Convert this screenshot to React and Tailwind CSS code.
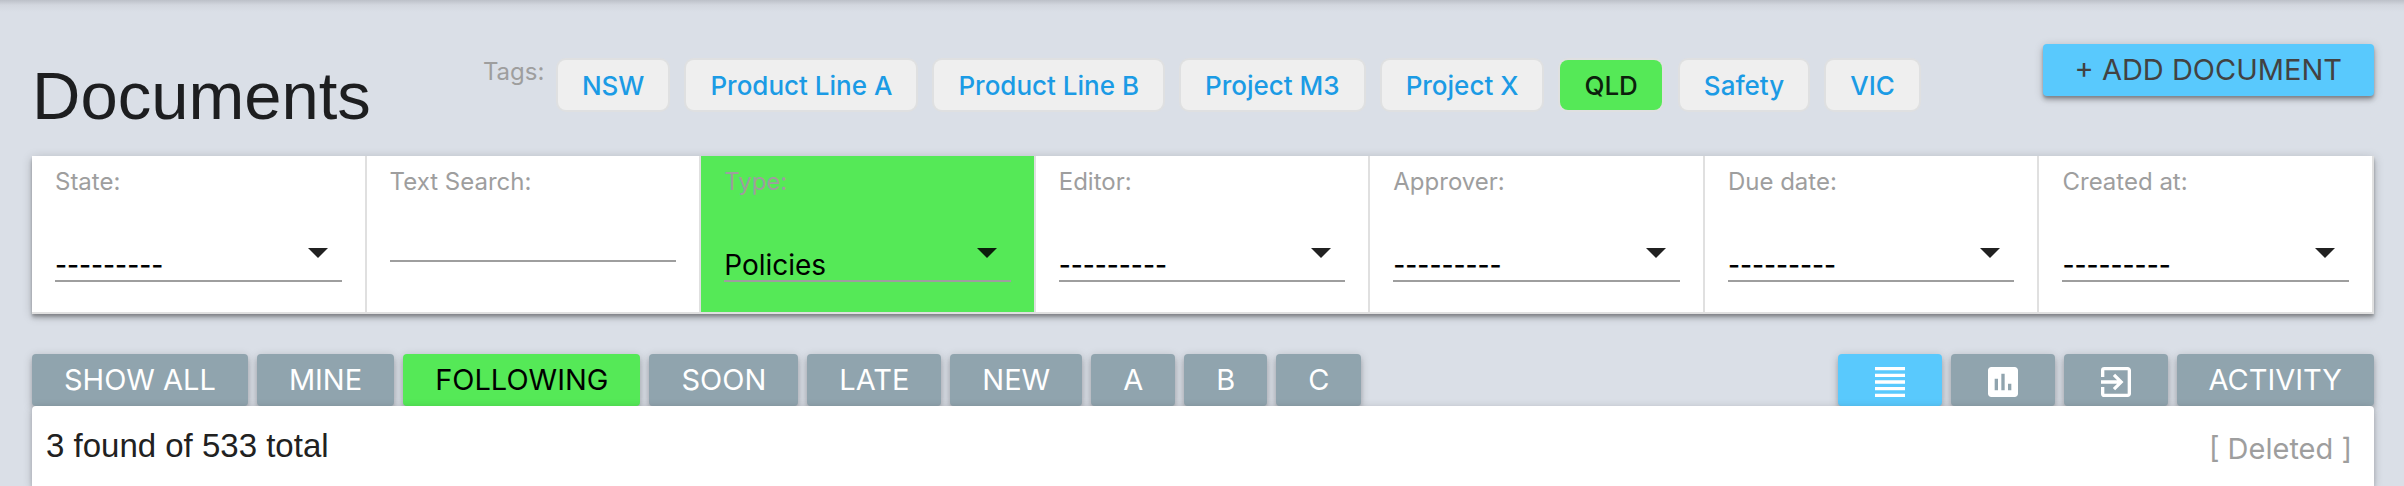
import React, { useState } from 'react';
import { MdFormatAlignJustify, MdAssessment, MdExitToApp } from 'react-icons/md';

const tags = ['NSW', 'Product Line A', 'Product Line B', 'Project M3', 'Project X', 'QLD', 'Safety', 'VIC'];

const filters = [
  { id: 'state', label: 'State:', options: ['---------'] },
  { id: 'search', label: 'Text Search:', text: true },
  { id: 'type', label: 'Type:', options: ['Policies', '---------'], active: true },
  { id: 'editor', label: 'Editor:', options: ['---------'] },
  { id: 'approver', label: 'Approver:', options: ['---------'] },
  { id: 'due', label: 'Due date:', options: ['---------'] },
  { id: 'created', label: 'Created at:', options: ['---------'] }
];

const tabs = ['SHOW ALL', 'MINE', 'FOLLOWING', 'SOON', 'LATE', 'NEW', 'A', 'B', 'C'];

const views = [
  { id: 'list', label: 'List view', Icon: MdFormatAlignJustify },
  { id: 'report', label: 'Report view', Icon: MdAssessment },
  { id: 'export', label: 'Export', Icon: MdExitToApp }
];

const tabShadow = 'shadow-[0_4px_4px_rgba(0,0,0,0.14),0_2px_10px_rgba(0,0,0,0.2)]';
const raisedShadow = 'shadow-[0_4px_4px_rgba(0,0,0,0.2),0_2px_2px_rgba(0,0,0,0.14),0_2px_10px_rgba(0,0,0,0.2)]';

const Filter = ({ filter }) => (
  <div
    className={`flex-1 min-w-0 h-[156px] px-[23px] pt-1 border-r-2 border-[#e0e0e0] ${
      filter.active ? 'bg-[#55e957]' : 'bg-white'
    }`}
  >
    <label htmlFor={filter.id} className="block text-[24px] leading-[44px] text-[#9e9e9e]">
      {filter.label}
    </label>
    {filter.text ? (
      <input
        id={filter.id}
        type="text"
        className="block w-full h-[58px] border-b-2 border-[#9e9e9e] bg-transparent text-[28px] text-black outline-none"
      />
    ) : (
      <div className="relative mt-6">
        <select
          id={filter.id}
          className={`block w-full h-[54px] pt-[22px] appearance-none border-b-2 border-[#9e9e9e] bg-transparent leading-[30px] text-black outline-none ${
            filter.active ? 'text-[28px]' : 'text-[26px] font-medium'
          }`}
        >
          {filter.options.map(option => (
            <option key={option}>{option}</option>
          ))}
        </select>
        <svg className="absolute right-[14px] top-5 w-5 h-[10px] pointer-events-none" viewBox="0 0 20 10">
          <path d="M0 0h20L10 10z" fill="#000" fillOpacity="0.87" />
        </svg>
      </div>
    )}
  </div>
);

const App = () => {
  const [activeTag, setActiveTag] = useState('QLD');
  const [activeTab, setActiveTab] = useState('FOLLOWING');
  const [activeView, setActiveView] = useState('list');

  return (
    <div className="min-h-screen flex flex-col bg-[#dadfe7] bg-[linear-gradient(to_bottom,#bcc0c8,#d3d7df_5px,#dadfe7_12px)] pl-8 pr-[30px] font-['Inter',sans-serif]">
      <header className="flex items-start h-[156px]">
        <h1 className="pt-[54px] font-['Liberation_Sans',sans-serif] text-[67px] leading-[84px] font-normal text-[#1d1e20]">Documents</h1>
        <div className="flex items-start pt-[60px] pl-[112px]">
          <span className="w-[75px] text-[24px] leading-6 text-[#9e9e9e]">Tags:</span>
          <div className="flex gap-[18px]">
            {tags.map(tag => (
              <button
                key={tag}
                onClick={() => setActiveTag(tag)}
                className={`h-[50px] px-6 rounded-lg text-[26px] font-medium whitespace-nowrap shadow-[0_0_0_2px_rgba(224,224,224,0.8)] ${
                  tag === activeTag ? 'bg-[#55e957] text-[#0c200c]' : 'bg-[#efefef] text-[#1b9be5]'
                }`}
              >
                {tag}
              </button>
            ))}
          </div>
        </div>
        <button className={`ml-auto mt-11 h-[52px] px-8 rounded-sm bg-[#59c9fd] text-[29px] text-[#424242] whitespace-nowrap ${raisedShadow}`}>
          + ADD DOCUMENT
        </button>
      </header>

      <section className={`flex border-b-2 border-[#e0e0e0] ${raisedShadow}`}>
        {filters.map(filter => (
          <Filter key={filter.id} filter={filter} />
        ))}
      </section>

      <nav className="flex gap-[9px] mt-10">
        {tabs.map(tab => (
          <button
            key={tab}
            onClick={() => setActiveTab(tab)}
            className={`h-[52px] px-8 rounded-sm text-[29px] whitespace-nowrap ${tabShadow} ${
              tab === activeTab ? 'bg-[#55e957] text-black' : 'bg-[#90a4ae] text-white'
            }`}
          >
            {tab}
          </button>
        ))}
        <div className="flex gap-[9px] ml-auto">
          {views.map(({ id, label, Icon }) => (
            <button
              key={id}
              aria-label={label}
              onClick={() => setActiveView(id)}
              className={`flex items-center justify-center w-[104px] h-[52px] rounded-sm text-white ${tabShadow} ${
                id === activeView ? 'bg-[#59c9fd]' : 'bg-[#90a4ae]'
              }`}
            >
              <Icon size={40} className="mt-1" />
            </button>
          ))}
          <button className={`h-[52px] px-8 rounded-sm bg-[#90a4ae] text-[29px] text-white ${tabShadow}`}>
            ACTIVITY
          </button>
        </div>
      </nav>

      <main className="relative flex grow items-start justify-between pl-[14px] pr-[22px] pt-5 rounded-t-sm bg-white shadow-[0_4px_4px_rgba(0,0,0,0.14),0_2px_10px_rgba(0,0,0,0.2)]">
        <p className="font-['Liberation_Sans',sans-serif] text-[33px] leading-10 text-[#212121]">3 found of 533 total</p>
        <a href="#deleted" className="text-[29px] leading-[46px] text-[#9e9e9e]">[ Deleted ]</a>
      </main>
    </div>
  );
};

export default App;
